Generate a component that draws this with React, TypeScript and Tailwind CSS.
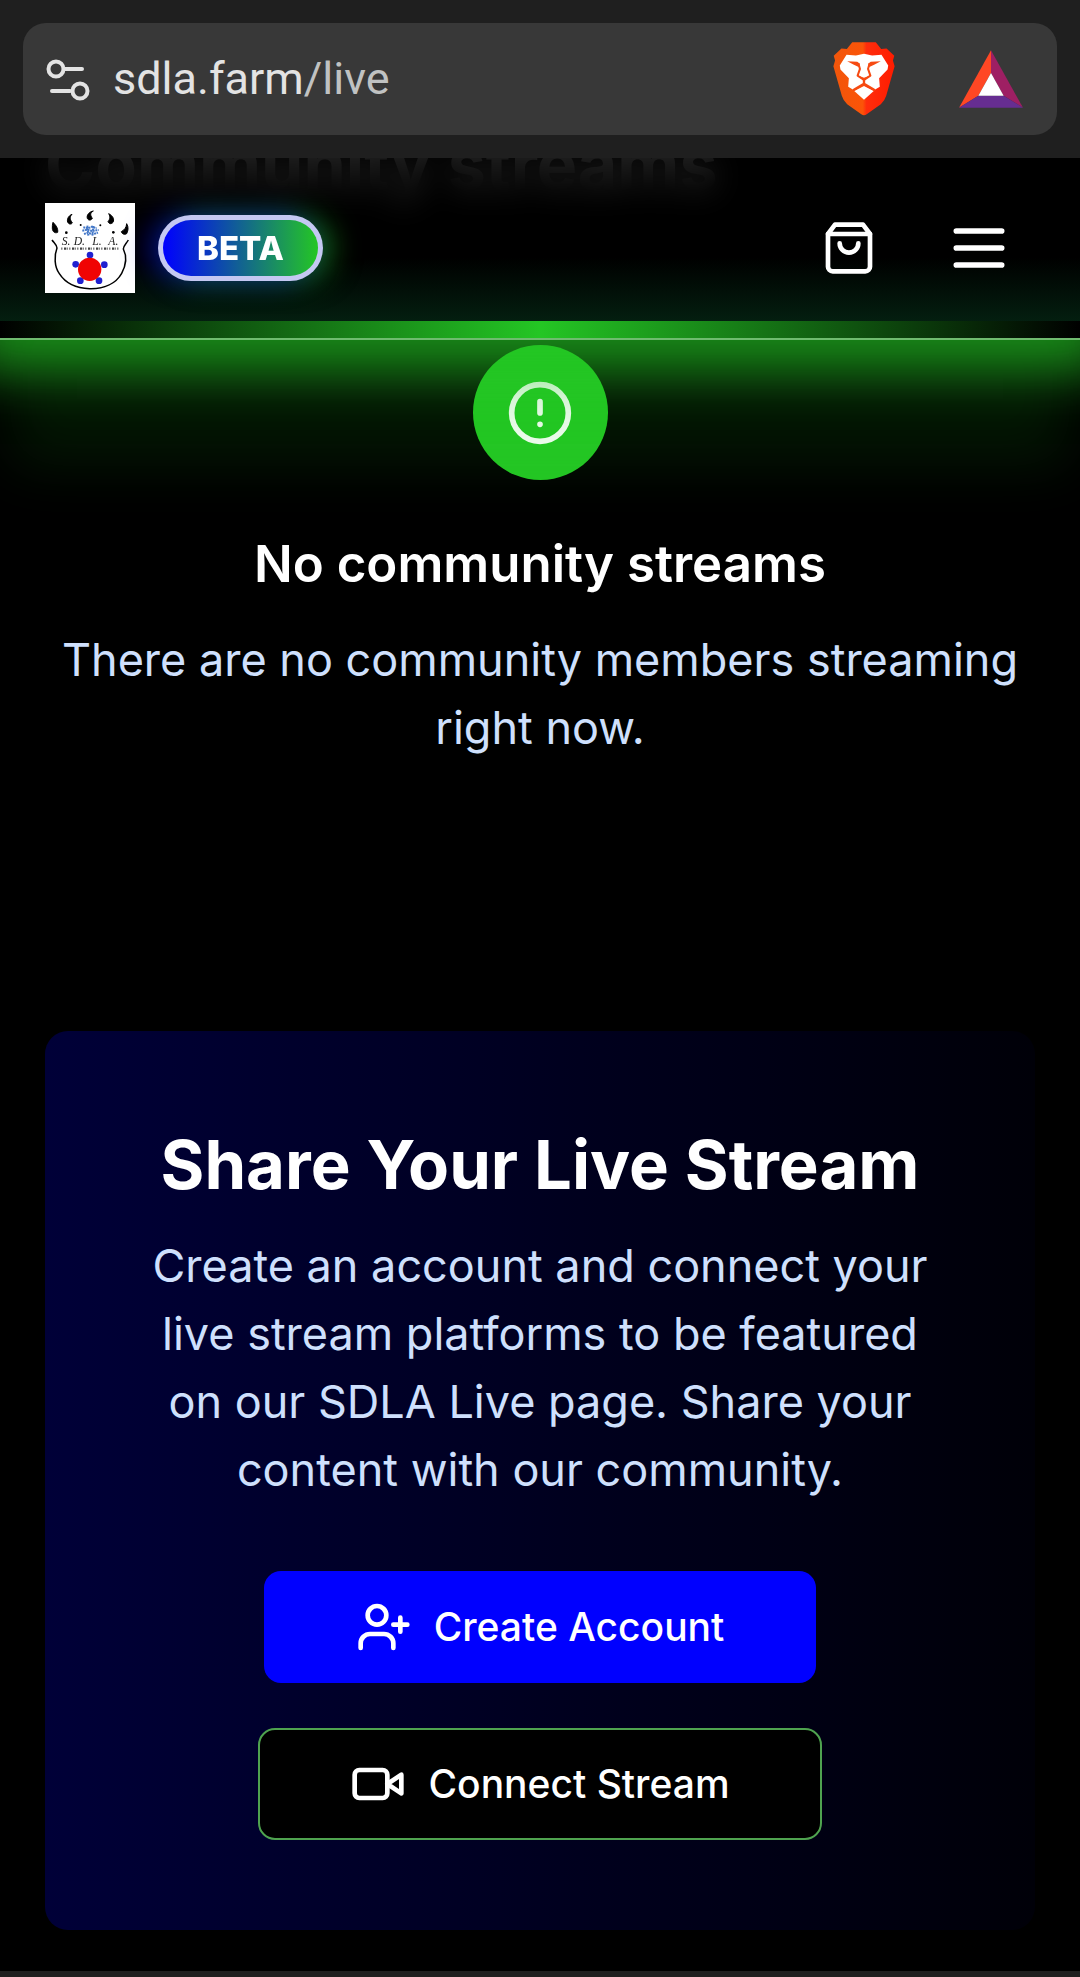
import type { ReactNode } from "react";

function Stroke({ className, children }: { className: string; children: ReactNode }) {
  return (
    <svg
      viewBox="0 0 24 24"
      fill="none"
      stroke="currentColor"
      strokeWidth="2"
      strokeLinecap="round"
      strokeLinejoin="round"
      aria-hidden="true"
      className={className}
    >
      {children}
    </svg>
  );
}

function BraveLion() {
  return (
    <svg viewBox="0 0 184 220" className="h-[74px] w-[62px]" aria-hidden="true">
      <defs>
        <linearGradient id="lion" x1="0" x2="1" y1="0" y2="0">
          <stop offset="0" stopColor="#f1560b" />
          <stop offset="0.48" stopColor="#fb5408" />
          <stop offset="0.54" stopColor="#ff2d0c" />
          <stop offset="1" stopColor="#ff1c00" />
        </linearGradient>
      </defs>
      <path
        fill="url(#lion)"
        d="M57 1h70l16 20 16-2 23 22-4 14 5 17-25 88q-4 14-16 25l-42 30q-8 6-16 0l-42-30q-12-11-16-25L1 72l5-17-4-14 23-22 16 2z"
      />
      <path
        fill="#fff"
        d="m40 38 28 2 24-5 24 5 28-2 20 32-2 12-25 26 2 25-15 9-32-18-32 18-15-9 2-25-25-26-2-12z"
      />
      <path fill="#fff" d="m92 131 29 15-29 26-29-26z" />
      <g fill="none" stroke="#f64a12" strokeLinejoin="round" strokeLinecap="round">
        <path strokeWidth="6" d="M76 66l4 14-7 20 19 13 19-13-7-20 4-14" />
        <path strokeWidth="7" d="M92 114v10M62 142l30-18 30 18" />
      </g>
      <path fill="#f64a12" d="m42 57 30 2 8 6-4 9-14-6zM142 57l-30 2-8 6 4 9 14-6zM76 100l16 6 16-6-16 17z" />
    </svg>
  );
}

function BatTriangle() {
  return (
    <svg viewBox="0 0 192 172" className="h-[58px] w-16" aria-hidden="true">
      <path fill="#ff4724" d="M96 0v68l-38 68L0 172z" />
      <path fill="#9e1f63" d="M96 0v68l38 68 58 36z" />
      <path fill="#662d91" d="m0 172 58-36h76l58 36z" />
      <path fill="#fff" d="m96 68 38 68H58z" />
    </svg>
  );
}

function SdlaLogo() {
  return (
    <svg viewBox="0 0 270 270" className="size-[90px] bg-white" role="img" aria-label="SDLA">
      <g fill="#000" stroke="#000" strokeWidth="3" strokeLinejoin="round">
        <path d="M24 58c8 8 16 18 14 30-8 4-16-2-16-12 0-6 0-12 2-18z" />
        <path d="M81 34c-8 8-6 16 1 26-4 5-11 4-14-3-3-9 3-19 13-23z" />
        <path d="M145 24c-10 6-10 12-3 22-4 7-12 7-15 0-3-10 6-20 18-22z" />
        <path d="M191 32c12 6 18 16 13 26-5 6-12 5-15-2 6-8 8-14 2-24z" />
        <path d="M245 62c6 10 5 20 0 30-6 4-14 1-16-6 10-6 15-12 16-24z" />
      </g>
      <g fill="#000">
        <circle cx="64" cy="89" r="4" />
        <circle cx="107" cy="66" r="3" />
        <circle cx="166" cy="67" r="3" />
        <circle cx="205" cy="88" r="4" />
      </g>
      <path
        fill="none"
        stroke="#000"
        strokeWidth="4.5"
        d="M21 111c6 9 14 14 15 24-9 23-8 56 7 77 18 28 50 44 91 45 44 1 79-16 96-46 14-26 15-53 5-73 0-10 9-16 15-27"
      />
      <g stroke="#4478c8" strokeWidth="6" fill="none">
        <path d="m115 73 14 3 12-5 14 5M112 83l14-3 15 4 20-3M117 93l12-4 14 5 16-5M127 68l3 30M145 69l-3 29" strokeDasharray="6 2" />
      </g>
      <g fill="#222" fontFamily="Liberation Serif, serif" fontStyle="italic" fontSize="35">
        <text x="50" y="127">S.</text>
        <text x="86" y="127">D.</text>
        <text x="142" y="127">L.</text>
        <text x="190" y="127">A.</text>
      </g>
      <path d="M49 137h172" stroke="#444" strokeWidth="7" strokeDasharray="3 5 7 3 2 4" />
      <g fill="#2020d0">
        <circle cx="135" cy="156" r="10" />
        <circle cx="92" cy="184" r="10" />
        <circle cx="178" cy="185" r="10" />
        <circle cx="106" cy="233" r="10" />
        <circle cx="162" cy="233" r="10" />
      </g>
      <circle cx="134" cy="199" r="35" fill="#f00404" />
    </svg>
  );
}

function AddressBar() {
  return (
    <div className="relative z-20 bg-[#1f1f1f] p-[23px]">
      <div className="flex h-28 items-center rounded-[23px] bg-[#383838] pr-[34px] pl-[22px]">
        <button aria-label="Site information" className="text-[#e3e3e3]">
          <svg viewBox="0 0 46 44" className="h-11 w-[46px]" fill="none" stroke="currentColor" strokeWidth="4" strokeLinecap="round" aria-hidden="true">
            <circle cx="11" cy="12" r="7.5" />
            <path d="M19 12h18M7 34h18" />
            <circle cx="35" cy="34" r="7.5" />
          </svg>
        </button>
        <a
          href="#live"
          className="ml-[22px] flex-1 font-[Roboto,sans-serif] text-[45px] leading-[60px] text-[#e3e3e3]"
        >
          sdla.farm<span className="text-[#c0c2c2]">/live</span>
        </a>
        <button aria-label="Brave Shields">
          <BraveLion />
        </button>
        <button aria-label="Brave Rewards" className="ml-16">
          <BatTriangle />
        </button>
      </div>
    </div>
  );
}

function SiteHeader() {
  return (
    <header className="sticky top-0 z-10 flex items-center border-b-2 border-[#7bd07b]/90 bg-black/86 p-[45px] shadow-[0_0_48px_32px_rgba(36,198,36,0.66),0_136px_56px_-10px_rgba(36,198,36,0.11)] backdrop-blur-[16px]">
      <div className="pointer-events-none absolute inset-x-0 bottom-0 h-20 bg-linear-to-t from-[#06341a]/75 to-transparent" />
      <div className="pointer-events-none absolute inset-x-0 bottom-0 h-[17px] bg-linear-to-r/srgb from-black via-[#24c624] to-black" />
      <a href="#home" className="relative">
        <SdlaLogo />
      </a>
      <span className="relative ml-[23px] rounded-full bg-[#c4c8f2] p-[5px] shadow-[-10px_0_28px_rgba(0,0,255,0.45),10px_0_28px_rgba(36,198,36,0.5)]">
        <span className="block rounded-full bg-linear-to-r/srgb from-[#0000ff] to-[#24c624] px-[34px] py-2 text-[33px] leading-10 font-extrabold text-white">
          BETA
        </span>
      </span>
      <button aria-label="Cart" className="relative ml-auto px-[22px] py-[11px] text-white">
        <Stroke className="size-14">
          <path d="M6 2 3 6v14a2 2 0 0 0 2 2h14a2 2 0 0 0 2-2V6l-3-4Z" />
          <path d="M3 6h18" />
          <path d="M16 10a4 4 0 0 1-8 0" />
        </Stroke>
      </button>
      <button aria-label="Menu" className="relative ml-6 px-[22px] py-[11px] text-white">
        <Stroke className="size-[68px]">
          <path d="M4 6h16M4 12h16M4 18h16" />
        </Stroke>
      </button>
    </header>
  );
}

export default function App() {
  return (
    <div className="flex min-h-screen flex-col bg-black font-[Inter,sans-serif]">
      <AddressBar />
      <div className="relative flex-1">
        <SiteHeader />
        <main className="-mt-[216px] px-[45px] pb-10">
          <section className="text-center">
            <h2 className="text-left text-[68px] leading-[80px] font-bold text-white">Community streams</h2>
            <div className="mx-auto mt-[141px] flex size-[135px] items-center justify-center rounded-full bg-[#24c624] text-white">
              <Stroke className="size-[68px]">
                <circle cx="12" cy="12" r="10" />
                <path d="M12 8v4M12 16h.01" />
              </Stroke>
            </div>
            <h3 className="mt-[45px] text-[51px] leading-[78px] font-semibold text-white">No community streams</h3>
            <p className="mt-[23px] text-[45px] leading-[68px] text-[#cfe0fd]">
              There are no community members streaming right now.
            </p>
          </section>
          <section className="mt-[269px] rounded-[23px] bg-linear-to-r/srgb from-[#000038] to-[#000008] p-[90px] text-center">
            <h2 className="text-[67px] leading-[88px] font-bold text-white">Share Your Live Stream</h2>
            <p className="mt-[23px] text-[45px] leading-[68px] text-[#cfe0fd]">
              Create an account and connect your live stream platforms to be featured on our SDLA Live page. Share your
              content with our community.
            </p>
            <div className="mt-[67px] flex flex-col items-center gap-[45px]">
              <button className="flex h-28 items-center gap-[22px] rounded-[17px] bg-[#0000ff] px-[92px] text-[39px] leading-14 font-medium text-white">
                <Stroke className="size-14">
                  <path d="M16 21v-2a4 4 0 0 0-4-4H6a4 4 0 0 0-4 4v2" />
                  <circle cx="9" cy="7" r="4" />
                  <path d="M19 8v6M22 11h-6" />
                </Stroke>
                Create Account
              </button>
              <button className="flex h-28 items-center gap-[22px] rounded-[17px] border-2 border-[#4fa34f] bg-black px-[90px] text-[39px] leading-14 font-medium text-white">
                <Stroke className="size-14">
                  <path d="m22 8-6 4 6 4V8Z" />
                  <rect x="2" y="6" width="14" height="12" rx="2" />
                </Stroke>
                Connect Stream
              </button>
            </div>
          </section>
        </main>
      </div>
      <div className="h-1.5 bg-[#1f1f1f]" />
    </div>
  );
}
